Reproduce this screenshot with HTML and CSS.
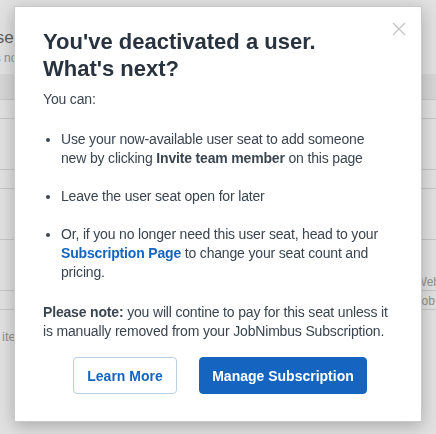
FILE: index.html
```html
<!DOCTYPE html>
<html lang="en">
<head>
    <meta charset="UTF-8">
    <meta name="viewport" content="width=device-width, initial-scale=1.0">
    <title>Deactivated User</title>
    <link rel="stylesheet" href="styles.css">
</head>
<body>
    <!-- faded page behind the dialog -->
    <div class="page">
        <div class="page-head">
            <span class="page-title">Purchase</span>
            <span class="page-sub">Seats now</span>
        </div>
        <div class="page-row band"></div>
        <div class="page-row"></div>
        <div class="page-row tall"></div>
        <div class="page-row"></div>
        <div class="page-row tall"></div>
        <div class="page-row tall">
            <span class="row-left">items</span>
            <span class="row-right">Web<br>Job</span>
        </div>
        <div class="page-row"></div>
    </div>

    <div class="overlay">
        <div class="modal">
            <button class="modal-close" aria-label="Close">
                <svg width="14" height="14" viewBox="0 0 14 14">
                    <path d="M1 1 L13 13 M13 1 L1 13" stroke="#c4c4c4" stroke-width="1.2" fill="none"/>
                </svg>
            </button>

            <h1 class="modal-title">You've deactivated a user. What's next?</h1>
            <p class="modal-text">You can:</p>

            <ul class="modal-list">
                <li>Use your now-available user seat to add someone new by clicking <b>Invite team member</b> on this page</li>
                <li>Leave the user seat open for later</li>
                <li>Or, if you no longer need this user seat, head to your <a href="#" class="link">Subscription Page</a> to change your seat count and pricing.</li>
            </ul>

            <p class="modal-text note"><b>Please note:</b> you will contine to pay for this seat unless it is manually removed from your JobNimbus Subscription.</p>

            <div class="modal-actions">
                <button class="btn btn-outline">Learn More</button>
                <button class="btn btn-primary">Manage Subscription</button>
            </div>
        </div>
    </div>
</body>
</html>
```

FILE: styles.css
```css
body {
    margin: 0;
    font-family: 'Liberation Sans', Arial, sans-serif;
    background-color: #fff;
    color: #3b4550;
}

/* background page */
.page {
    height: 434px;
    overflow: hidden;
}
.page-head {
    display: flex;
    flex-direction: column;
    padding: 28px 0 0 0;
    height: 46px;
}
.page-title {
    font-size: 17px;
    color: #555;
    margin-left: -58px;
}
.page-sub {
    font-size: 12px;
    color: #999;
    margin-top: 3px;
    margin-left: -30px;
}
.page-row {
    height: 18px;
    border-bottom: 1px solid #ddd;
    position: relative;
}
.page-row.band {
    height: 25px;
    background-color: #f1f1f1;
}
.page-row.tall {
    height: 50px;
}
.row-left {
    position: absolute;
    left: 2px;
    top: 89px;
    font-size: 13px;
    color: #999;
}
.row-right {
    position: absolute;
    right: -4px;
    top: 33px;
    font-size: 12px;
    line-height: 19px;
    color: #999;
}

/* dim layer + dialog */
.overlay {
    position: fixed;
    inset: 0;
    background-color: rgba(120, 120, 120, 0.22);
    display: flex;
    justify-content: center;
    align-items: flex-start;
    padding-top: 6px;
}
.modal {
    position: relative;
    box-sizing: border-box;
    width: 408px;
    height: 416px;
    background-color: #fff;
    border: 1px solid #c9c9c9;
    box-shadow: 0 4px 16px rgba(0, 0, 0, 0.25);
    padding: 21px 28px 0 28px;
}
.modal-close {
    position: absolute;
    top: 15px;
    right: 15px;
    background: none;
    border: none;
    padding: 0;
    width: 14px;
    height: 14px;
    cursor: pointer;
}
.modal-close svg {
    display: block;
}
.modal-title {
    margin: 0;
    font-size: 22px;
    line-height: 27px;
    font-weight: bold;
    color: #28333f;
    padding-right: 20px;
}
.modal-text {
    margin: 8px 0 0 0;
    font-size: 14px;
    line-height: 19px;
    letter-spacing: -0.17px;
}
.modal-list {
    margin: 21px 0 0 0;
    padding-left: 18px;
    font-size: 14px;
    line-height: 19px;
    letter-spacing: -0.17px;
}
.modal-list li {
    margin-bottom: 19px;
}
.modal-text.note {
    margin-top: 21px;
}
.link {
    color: #1565c0;
    font-weight: bold;
    text-decoration: none;
}
.modal-actions {
    display: flex;
    gap: 22px;
    margin-top: 16px;
    padding-left: 30px;
}
.btn {
    font-family: 'Liberation Sans', Arial, sans-serif;
    font-size: 14px;
    font-weight: bold;
    height: 37px;
    border-radius: 4px;
    cursor: pointer;
}
.btn-outline {
    width: 104px;
    background-color: #fff;
    color: #1565c0;
    border: 1px solid #b9d0ea;
}
.btn-primary {
    width: 168px;
    background-color: #1565c0;
    color: #fff;
    border: 1px solid #1565c0;
}
```
